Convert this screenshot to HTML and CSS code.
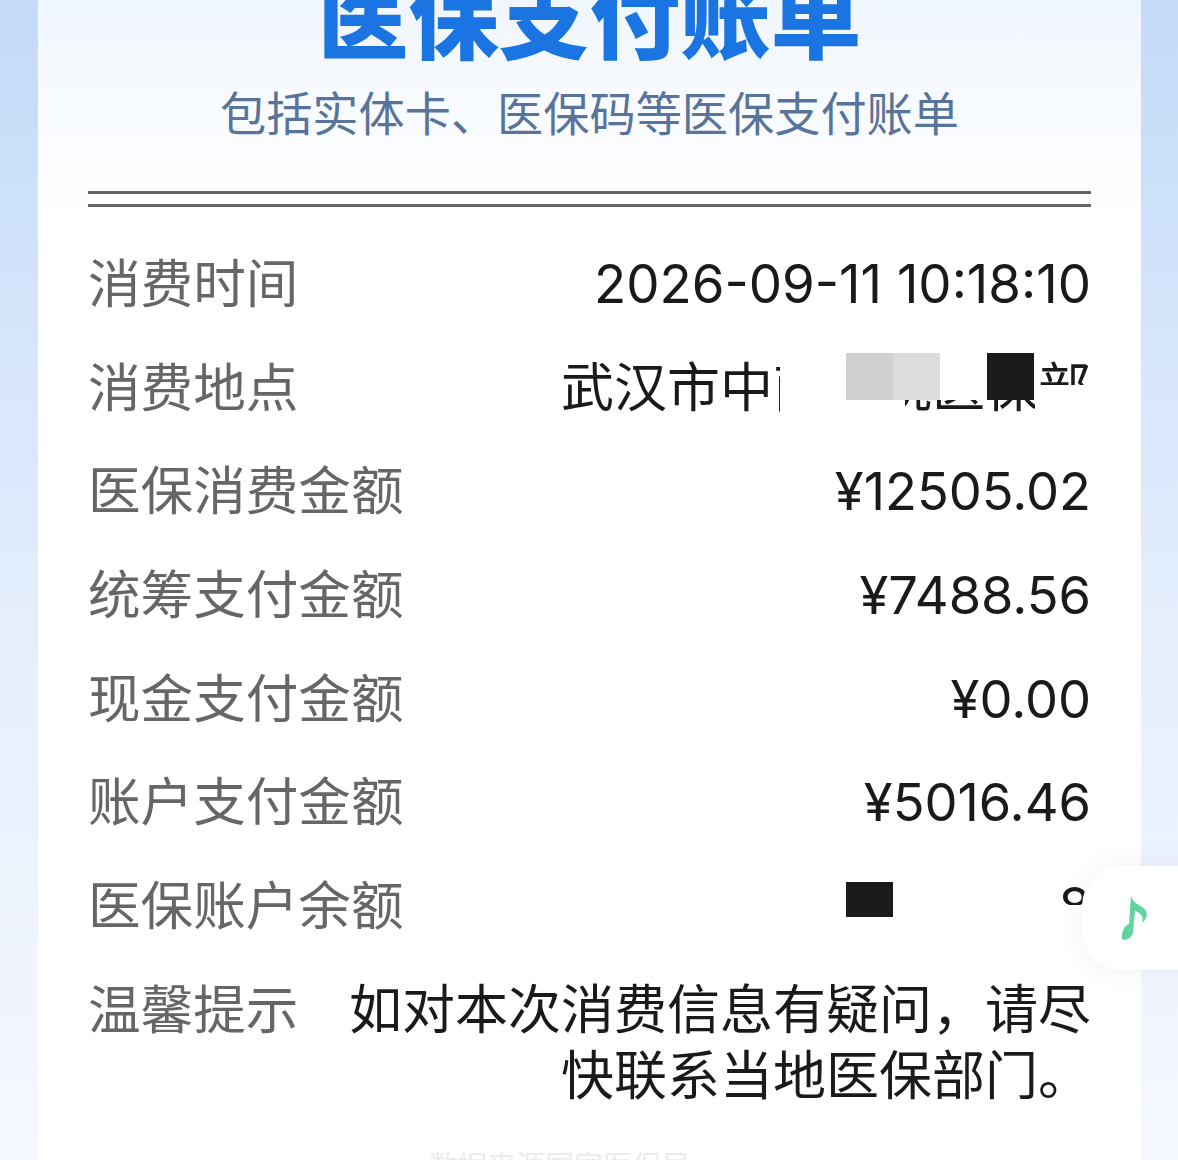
FILE: index.html
```html
<!DOCTYPE html>
<html lang="zh-CN">
<head>
    <meta charset="UTF-8">
    <meta name="viewport" content="width=device-width, initial-scale=1.0">
    <title>医保支付账单</title>
    <link rel="stylesheet" href="styles.css">
</head>
<body>
    <div class="card">
        <div class="head">
            <h1 class="title">医保支付账单</h1>
            <p class="subtitle">包括实体卡、医保码等医保支付账单</p>
        </div>
        <div class="double-line"></div>
        <div class="rows">
            <div class="row"><span class="label">消费时间</span><span class="value wide time">2026-09-11 10:18:10</span></div>
            <div class="row">
                <span class="label">消费地点</span>
                <span class="value wide">武汉市中南医院医保部</span>
                <div class="mask mask-place"></div>
                <div class="mask mask-place-end"></div>
                <div class="mask mask-place-low"></div>
                <div class="block block-gray1"></div>
                <div class="block block-gray2"></div>
                <div class="block block-dark"></div>
            </div>
            <div class="row"><span class="label">医保消费金额</span><span class="value">¥12505.02</span></div>
            <div class="row"><span class="label">统筹支付金额</span><span class="value">¥7488.56</span></div>
            <div class="row"><span class="label">现金支付金额</span><span class="value">¥0.00</span></div>
            <div class="row"><span class="label">账户支付金额</span><span class="value">¥5016.46</span></div>
            <div class="row">
                <span class="label">医保账户余额</span>
                <span class="value">¥3408.18</span>
                <div class="mask mask-balance"></div>
                <div class="mask mask-balance-low"></div>
                <div class="block block-balance"></div>
            </div>
            <div class="row row-tip">
                <span class="label">温馨提示</span>
                <span class="value wide tip">如对本次消费信息有疑问，请尽快联系当地医保部门。</span>
            </div>
        </div>
        <div class="footer-text">数据来源国家医保局</div>
    </div>

    <div class="float-tab">
        <svg class="note" width="30" height="46" viewBox="0 0 30 46">
            <path d="M11 1 C13 7 17 9 22 12 C28 16 29 22 22 28 C24 22 21 18 15 16 L13 38 C11 44 5 46 2 44 C1 38 4 31 9 29 Z" fill="#62d3a0"/>
        </svg>
    </div>
</body>
</html>
```
FILE: styles.css
```css
html, body {
    margin: 0;
    height: 1160px;
    overflow: hidden;
}
body {
    font-family: "Inter", "Noto Sans CJK SC", sans-serif;
    background: linear-gradient(180deg, #c3daf9 0, #d3e4fb 300px, #e8f0fd 700px, #f5f8fe 1160px);
}
.card {
    margin: 0 37px 0 38px;
    height: 1160px;
    padding: 0 50px;
    box-sizing: border-box;
    background: linear-gradient(180deg, #f0f6fd 0, #fafcff 140px, #fff 220px);
    overflow: hidden;
}
.head {
    text-align: center;
}
.title {
    margin: -42px 0 0;
    font-family: "Noto Sans CJK SC", sans-serif;
    font-size: 90.6px;
    line-height: 110px;
    font-weight: 900;
    color: #1a75e2;
}
.subtitle {
    margin: 10px 0 0;
    font-family: "Noto Sans CJK SC", sans-serif;
    font-size: 46.2px;
    line-height: 66px;
    color: #59749a;
}
.double-line {
    margin-top: 47px;
    height: 10px;
    border-top: 3px solid #666;
    border-bottom: 3px solid #666;
}
.rows {
    margin-top: 40px;
}
.row {
    position: relative;
    display: flex;
    justify-content: space-between;
    align-items: baseline;
    height: 66px;
    margin-bottom: 37.7px;
    font-size: 52.4px;
    line-height: 66px;
}
.row-tip {
    height: 132px;
    margin-bottom: 38px;
}
.label {
    flex: none;
    color: #666;
    font-size: 52.6px;
    font-family: "Noto Sans CJK SC", sans-serif;
}
.value {
    color: #1a1a1a;
    text-align: right;
}
.wide {
    font-size: 53px;
}
.time {
    font-size: 52.8px;
}
.tip {
    width: 745px;
}
.mask {
    position: absolute;
    background: #fff;
}
.block {
    position: absolute;
    width: 47px;
    height: 47px;
}
.mask-place {
    left: 692px;
    top: -6px;
    width: 125px;
    height: 70px;
}
.mask-place-end {
    left: 817px;
    top: -6px;
    width: 130px;
    height: 55px;
}
.mask-place-low {
    left: 947px;
    top: 34px;
    width: 67px;
    height: 30px;
}
.block-gray1 {
    left: 758px;
    top: 2px;
    background: #d0d0d0;
}
.block-gray2 {
    left: 805px;
    top: 2px;
    background: #dcdcdc;
}
.block-dark {
    left: 899px;
    top: 2px;
    background: #1a1a1a;
}
.mask-balance {
    left: 690px;
    top: -10px;
    width: 282px;
    height: 84px;
}
.mask-balance-low {
    left: 960px;
    top: 36px;
    width: 54px;
    height: 40px;
}
.block-balance {
    left: 758px;
    top: 13px;
    height: 35px;
    background: #1a1a1a;
}
.footer-text {
    margin-top: 2px;
    text-align: center;
    font-size: 29px;
    color: #ececec;
    padding-right: 60px;
}
.float-tab {
    position: absolute;
    left: 1082px;
    top: 866px;
    width: 120px;
    height: 104px;
    display: flex;
    align-items: center;
    padding-left: 38px;
    box-sizing: border-box;
    background: #fff;
    border-radius: 40px 0 0 40px;
    box-shadow: 0 0 30px rgba(0, 0, 0, 0.06);
}
```
